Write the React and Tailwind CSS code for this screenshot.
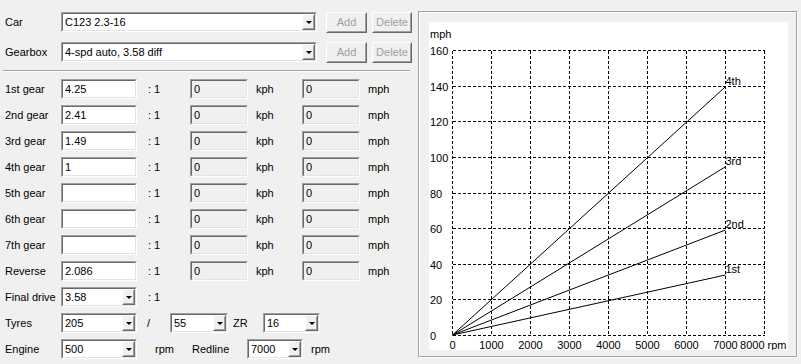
import React from "react";

// classic windows 3d borders
function Sunken({ className = "", bg = "bg-white", children }) {
  return (
    <div className={`border border-t-[#a0a0a0] border-l-[#a0a0a0] border-b-white border-r-white ${className}`}>
      <div className={`h-full border border-t-[#696969] border-l-[#696969] border-b-[#e3e3e3] border-r-[#e3e3e3] ${bg} flex items-center`}>
        {children}
      </div>
    </div>
  );
}

function Raised({ className = "", children }) {
  return (
    <div className={`border border-t-white border-l-white border-b-[#696969] border-r-[#696969] ${className}`}>
      <div className="h-full border border-t-[#f0f0f0] border-l-[#f0f0f0] border-b-[#a0a0a0] border-r-[#a0a0a0] bg-[#f0f0f0] flex items-center justify-center">
        {children}
      </div>
    </div>
  );
}

function TextBox({ value, width, readOnly }) {
  return (
    <Sunken className={`${width} h-[20px]`} bg={readOnly ? "bg-[#f0f0f0]" : "bg-white"}>
      <span className="pl-[2px]">{value}</span>
    </Sunken>
  );
}

function Combo({ value, width }) {
  return (
    <Sunken className={`${width} h-[20px]`}>
      <span className="pl-[2px] flex-1 truncate">{value}</span>
      <Raised className="w-[13px] h-full">
        <div className="w-0 h-0 border-x-[3px] border-x-transparent border-t-[3px] border-t-black" />
      </Raised>
    </Sunken>
  );
}

function Btn({ label, width }) {
  return (
    <Raised className={`${width} h-[21px]`}>
      <span className="text-[#a0a0a0]">{label}</span>
    </Raised>
  );
}

function GearRow({ label, ratio }) {
  return (
    <div className="flex h-[26px] items-center">
      <span className="w-[56px]">{label}</span>
      <TextBox width="w-[76px]" value={ratio} />
      <span className="ml-[11px] w-[42px]">: 1</span>
      <TextBox width="w-[58px]" value="0" readOnly />
      <span className="ml-[8px] w-[46px]">kph</span>
      <TextBox width="w-[58px]" value="0" readOnly />
      <span className="ml-[8px]">mph</span>
    </div>
  );
}

const gears = [
  ["1st gear", "4.25"],
  ["2nd gear", "2.41"],
  ["3rd gear", "1.49"],
  ["4th gear", "1"],
  ["5th gear", ""],
  ["6th gear", ""],
  ["7th gear", ""],
  ["Reverse", "2.086"],
];

const X0 = 23.5;
const XS = 39;
const Y0 = 313;
const YS = 35.625;

const curves = [
  { name: "4th", y: 64.7 },
  { name: "3rd", y: 144.7 },
  { name: "2nd", y: 208 },
  { name: "1st", y: 253 },
];

function Chart() {
  const ys = [0, 1, 2, 3, 4, 5, 6, 7, 8].map((i) => Math.round(Y0 - i * YS) + 0.5);
  const xs = [0, 1, 2, 3, 4, 5, 6, 7, 8].map((i) => X0 + i * XS);
  return (
    <svg width="359" height="328" className="block" fontSize="11" fill="black">
      {ys.map((y, i) => (
        <line key={"h" + i} x1={xs[0]} x2={xs[8]} y1={y} y2={y} stroke="black" strokeDasharray="3 2" shapeRendering="crispEdges" />
      ))}
      {xs.map((x, i) => (
        <line key={"v" + i} x1={x} x2={x} y1={ys[8]} y2={ys[0]} stroke="black" strokeDasharray="3 2" shapeRendering="crispEdges" />
      ))}
      <text x="1" y="12" dominantBaseline="central">mph</text>
      {ys.map((y, i) => (
        <text key={"yl" + i} x="1" y={y} dominantBaseline="central">{i * 20}</text>
      ))}
      {xs.slice(0, 8).map((x, i) => (
        <text key={"xl" + i} x={x} y="323" textAnchor="middle" dominantBaseline="central">{i * 1000}</text>
      ))}
      <text x="334.3" y="323" textAnchor="middle" dominantBaseline="central">8000 rpm</text>
      {curves.map((c) => (
        <g key={c.name}>
          <line x1={X0} y1={Y0} x2={xs[7]} y2={c.y} stroke="black" strokeWidth="1" />
          <text x={xs[7]} y={c.y - 2}>{c.name}</text>
        </g>
      ))}
    </svg>
  );
}

export default function App() {
  return (
    <div className="w-[801px] h-[364px] bg-[#f0f0f0] flex font-['Liberation_Sans',Arial,sans-serif] text-[11px] leading-[13px] text-black overflow-hidden">
      <div className="w-[418px] pl-[5px] pt-[11px] flex flex-col">
        <div className="flex h-[22px] items-center">
          <span className="w-[56px]">Car</span>
          <Combo width="w-[256px]" value="C123 2.3-16" />
          <div className="ml-[9px]"><Btn label="Add" width="w-[41px]" /></div>
          <div className="ml-[5px]"><Btn label="Delete" width="w-[40px]" /></div>
        </div>
        <div className="flex h-[22px] items-center mt-[8px]">
          <span className="w-[56px]">Gearbox</span>
          <Combo width="w-[256px]" value="4-spd auto, 3.58 diff" />
          <div className="ml-[9px]"><Btn label="Add" width="w-[41px]" /></div>
          <div className="ml-[5px]"><Btn label="Delete" width="w-[40px]" /></div>
        </div>
        <div className="mt-[7px] -ml-[2px] w-[407px] h-[2px] border-t border-t-[#a0a0a0] border-b border-b-white" />
        <div className="mt-[4px] flex flex-col">
          {gears.map(([l, r]) => (
            <GearRow key={l} label={l} ratio={r} />
          ))}
          <div className="flex h-[26px] items-center">
            <span className="w-[56px]">Final drive</span>
            <Combo width="w-[76px]" value="3.58" />
            <span className="ml-[11px]">: 1</span>
          </div>
          <div className="flex h-[26px] items-center">
            <span className="w-[56px]">Tyres</span>
            <Combo width="w-[76px]" value="205" />
            <span className="ml-[10px] w-[23px]">/</span>
            <Combo width="w-[58px]" value="55" />
            <span className="ml-[5px] w-[30px]">ZR</span>
            <Combo width="w-[57px]" value="16" />
          </div>
          <div className="flex h-[26px] items-center">
            <span className="w-[56px]">Engine</span>
            <Combo width="w-[76px]" value="500" />
            <span className="ml-[18px] w-[37px]">rpm</span>
            <span className="w-[55px]">Redline</span>
            <Combo width="w-[56px]" value="7000" />
            <span className="ml-[8px]">rpm</span>
          </div>
        </div>
      </div>
      <div className="mt-[11px] w-[380px] h-[347px] border border-t-[#a0a0a0] border-l-[#a0a0a0] border-b-white border-r-white">
        <div className="h-full border border-t-white border-l-white border-b-[#a0a0a0] border-r-[#a0a0a0] pl-[9px] pt-[9px]">
          <div className="w-[359px] h-[328px] bg-white">
            <Chart />
          </div>
        </div>
      </div>
    </div>
  );
}
